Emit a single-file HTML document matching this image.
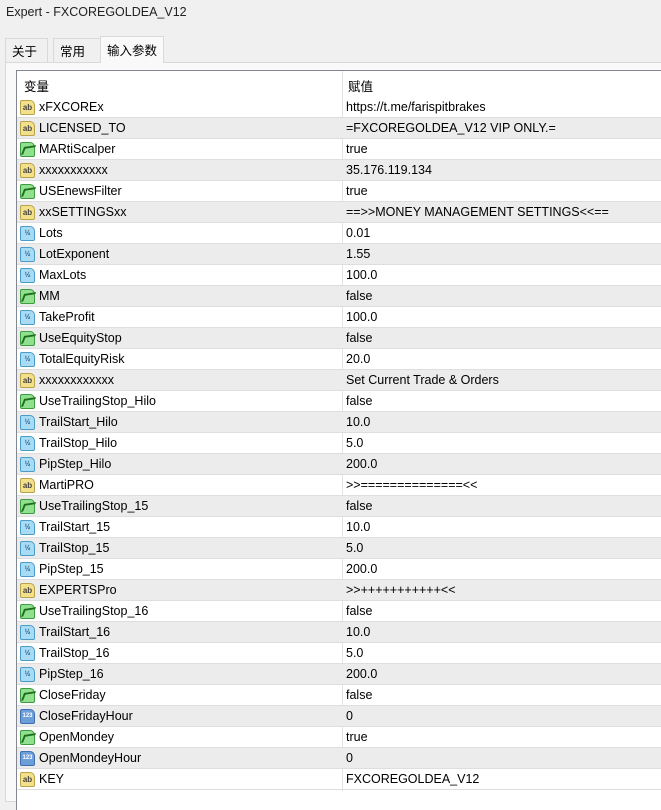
<!DOCTYPE html><html><head><meta charset="utf-8"><style>
*{margin:0;padding:0;box-sizing:border-box}
body{width:661px;height:800px;background:#f0f0f0;font-family:"Liberation Sans","Noto Sans CJK SC",sans-serif;font-size:12.5px;color:#000;position:relative;overflow:hidden}
.title{position:absolute;left:6px;top:5px;font-size:12.5px;color:#222}
.tab{position:absolute;top:38px;height:25px;border:1px solid #d9d9d9;border-bottom:none;background:#f0f0f0;padding:2px 6px;font-size:12.5px}
.panel{position:absolute;left:5px;top:62px;width:660px;height:740px;background:#f9f9f9;border:1px solid #d9d9d9}
.tbl{position:absolute;left:16px;top:70px;width:650px;height:740px;background:#fff;border-left:1px solid #828790;border-top:1px solid #828790}
.hdr{position:absolute;left:0;top:0;width:100%;height:26px;}
.hdr span{position:absolute;top:5px}
.vd{position:absolute;left:325px;top:0;width:1px;height:720px;background:#e3e3e3}
.row{position:absolute;left:0;width:100%;height:21px;border-bottom:1px solid #dedede}
.row.g{background:#ececec}
.row .n{position:absolute;left:22px;top:3px}
.row .v{position:absolute;left:329px;top:3px}
.ic{position:absolute;left:3px;top:3px;width:15px;height:15px;border-radius:2px 5px 2px 2px;font-size:8px;line-height:13px;text-align:center;font-weight:bold}
.ab{background:#f3e08a;border:1px solid #b9a24a;color:#444}
.bo{background:#8fe08f;border:1px solid #3e9c3e}
.bo:after{content:"";position:absolute;left:2px;top:3px;width:9px;height:6px;border-left:2px solid #1e6e1e;border-top:2px solid #1e6e1e;transform:skewX(-30deg) rotate(-10deg)}
.db{background:#a8dcf4;border:1px solid #4a9cc8;color:#1a5a8a;font-size:7px}
.in{background:#6c9ed8;border:1px solid #3f6fb0;color:#fff;font-size:6px}
</style></head><body>
<div class="title">Expert - FXCOREGOLDEA_V12</div>
<div class="tab" style="left:5px;width:43px">关于</div>
<div class="tab" style="left:53px;width:48px">常用</div>
<div class="tab" style="left:100px;width:64px;top:36px;height:27px;padding-top:3px;background:#f9f9f9;z-index:2">输入参数</div>
<div class="panel"></div>
<div class="tbl">
<div class="hdr"><span style="left:7px">变量</span><span style="left:331px">赋值</span></div>
<div class="vd"></div>
<div id="rows"></div>
</div>
<script>
var d=[["ab","xFXCOREx","https://t.me/farispitbrakes"],["ab","LICENSED_TO","=FXCOREGOLDEA_V12 VIP ONLY.="],["bo","MARtiScalper","true"],["ab","xxxxxxxxxxx","35.176.119.134"],["bo","USEnewsFilter","true"],["ab","xxSETTINGSxx","==>>MONEY MANAGEMENT SETTINGS<<=="],["db","Lots","0.01"],["db","LotExponent","1.55"],["db","MaxLots","100.0"],["bo","MM","false"],["db","TakeProfit","100.0"],["bo","UseEquityStop","false"],["db","TotalEquityRisk","20.0"],["ab","xxxxxxxxxxxx","Set Current Trade & Orders"],["bo","UseTrailingStop_Hilo","false"],["db","TrailStart_Hilo","10.0"],["db","TrailStop_Hilo","5.0"],["db","PipStep_Hilo","200.0"],["ab","MartiPRO",">>==============<<"],["bo","UseTrailingStop_15","false"],["db","TrailStart_15","10.0"],["db","TrailStop_15","5.0"],["db","PipStep_15","200.0"],["ab","EXPERTSPro",">>+++++++++++<<"],["bo","UseTrailingStop_16","false"],["db","TrailStart_16","10.0"],["db","TrailStop_16","5.0"],["db","PipStep_16","200.0"],["bo","CloseFriday","false"],["in","CloseFridayHour","0"],["bo","OpenMondey","true"],["in","OpenMondeyHour","0"],["ab","KEY","FXCOREGOLDEA_V12"]];
var h="";d.forEach(function(r,i){var t={ab:"ab",bo:"",db:"½",in:"123"}[r[0]];h+='<div class="row'+(i%2?' g':'')+'" style="top:'+(26+i*21)+'px"><div class="ic '+r[0]+'">'+t+'</div><span class="n"></span><span class="v"></span></div>';});
document.getElementById("rows").innerHTML=h;
var rs=document.querySelectorAll(".row");d.forEach(function(r,i){rs[i].querySelector(".n").textContent=r[1];rs[i].querySelector(".v").textContent=r[2];});
</script>
</body></html>
